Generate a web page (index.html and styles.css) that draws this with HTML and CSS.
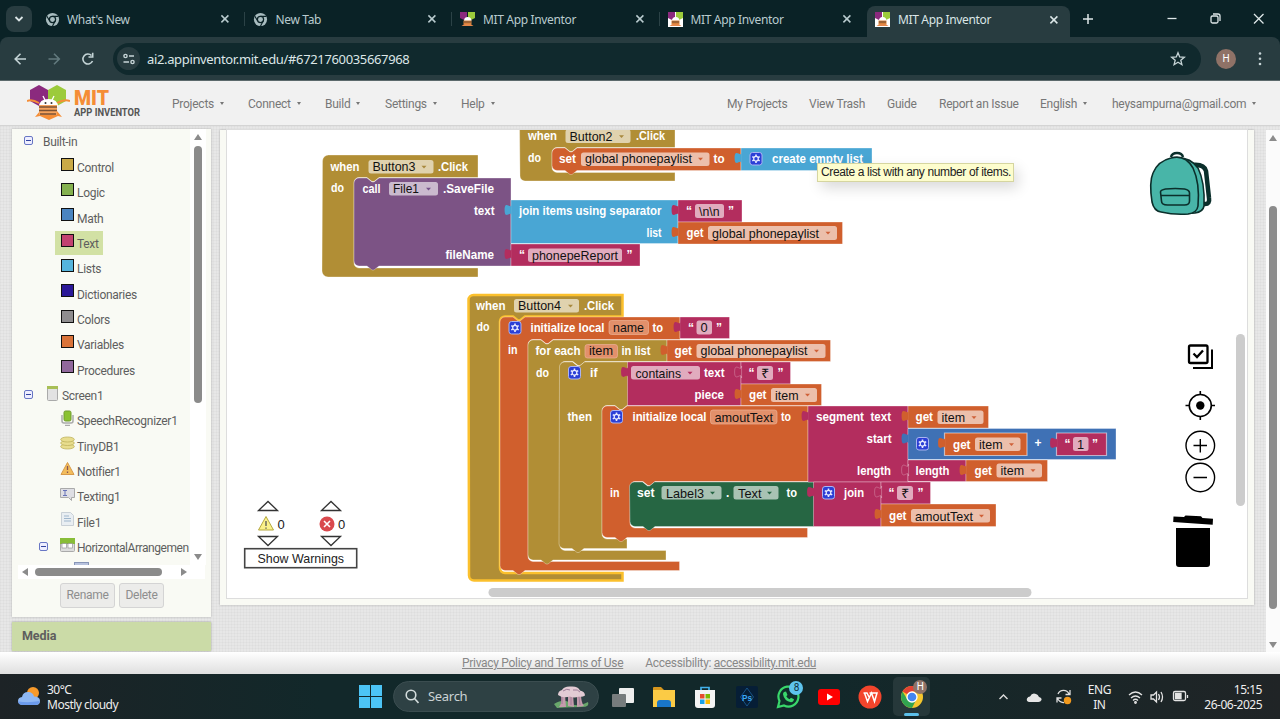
FILE: index.html
```html
<!DOCTYPE html>
<html lang="en">
<head>
<meta charset="utf-8">
<title>MIT App Inventor</title>
<link rel="stylesheet" href="styles.css">
</head>
<body>
<svg class="defs" width="0" height="0">
  <defs>
    <symbol id="chrome" viewBox="0 0 16 16"><circle cx="8" cy="8" r="7" fill="#a9bdc0"/><circle cx="8" cy="8" r="3.300" fill="#a9bdc0" stroke="#0a2226" stroke-width="1.300"/><path d="M8 4.600H14.200M5 9.700L2 4.500M10.900 9.700L8 15" stroke="#0a2226" stroke-width="1.200"/></symbol>
    <symbol id="bee" viewBox="0 0 43 35"><path fill="#8b2a7e" d="M12 0l9 5v11l-9 5-9-5V5z"/><path fill="#9ccb3b" d="M30 0l9 5v11l-9 5-9-5V5z"/><path fill="none" stroke="#f58d36" stroke-width="2" d="M0 16q5-2 12 2M43 16q-6-2-13 2"/><path fill="#f58d36" d="M8 32l5-6h17l5 6-4-1-9 4-9-4z"/><path fill="#fff" d="M12 22q0-8 9.500-8t9.500 8z"/><path stroke="#fff" stroke-width="1.300" fill="none" d="M18 15l-2-4M25 15l2-4"/><rect x="12" y="20" width="18" height="10" fill="#f6a35d"/><path d="M12 22h18M12 25.500h18M13 29h16" stroke="#7b5235" stroke-width="1.400"/><circle cx="18.500" cy="18" r="1" fill="#333"/><circle cx="24.500" cy="18" r="1" fill="#333"/></symbol>
    <symbol id="beetall" viewBox="0 0 15 15"><path fill="#8b2a7e" d="M0 0h7v5L4 8 0 6z"/><path fill="#9ccb3b" d="M8 0h7v6l-4 2-3-3z"/><path fill="#fff" d="M4 9q0-4 3.700-4T11.500 9z"/><path fill="#d8813a" d="M3.500 8.500h8v4h-8z"/><path d="M4 10h7" stroke="#7b5235" stroke-width="1.200"/><path fill="#e5884a" d="M1.500 14l3-2h6l3 2z"/></symbol>
    <symbol id="x" viewBox="0 0 10 10"><path d="M1.400 1.400l7 7M8.400 1.400l-7 7" stroke="currentColor" stroke-width="1.500"/></symbol>
  </defs>
</svg>

<header class="tabstrip">
  <div class="tab-menu"><svg width="10" height="8" viewBox="0 0 10 8"><path d="M1.500 2l3.500 3.500L8.500 2" fill="none" stroke="#dbe5e6" stroke-width="1.800"/></svg></div>
  <div class="tabs">
    <div class="tab"><svg class="fav"><use href="#chrome"/></svg><span>What's New</span><svg class="close"><use href="#x"/></svg></div>
    <div class="tab sep"><svg class="fav"><use href="#chrome"/></svg><span>New Tab</span><svg class="close"><use href="#x"/></svg></div>
    <div class="tab sep"><svg class="fav"><use href="#beetall"/></svg><span>MIT App Inventor</span><svg class="close"><use href="#x"/></svg></div>
    <div class="tab sep"><svg class="fav boxed"><use href="#beetall"/></svg><span>MIT App Inventor</span><svg class="close"><use href="#x"/></svg></div>
    <div class="tab active"><svg class="fav boxed"><use href="#beetall"/></svg><span>MIT App Inventor</span><svg class="close"><use href="#x"/></svg></div>
  </div>
  <svg class="win" width="207" height="37" viewBox="1073 0 207 37"><g fill="none" stroke="#dfe8e9" stroke-width="1.300"><path d="M1083 19h10M1088 14v10" stroke-width="1.500"/><path d="M1167.500 18.500h9"/><rect x="1211" y="16" width="7" height="7" rx="1.500"/><path d="M1213 14h5q2 0 2 2v5"/><path d="M1254 14l9.500 9.500M1263.500 14l-9.500 9.500"/></g></svg>
</header>

<div class="toolbar">
  <svg width="113" height="44" viewBox="0 37 113 44" fill="none" stroke-width="1.600"><path stroke="#c4d4d6" d="M26 59H15.500M20.500 53.700L15.200 59l5.300 5.300"/><path stroke="#637a7e" d="M48.500 59H59M54 53.700l5.300 5.300-5.300 5.300"/><path stroke="#c4d4d6" d="M92.500 61a5 5 0 1 1-1-5.500M92.700 52.800v4.200h-4.200"/></svg>
  <div class="omnibox">
    <span class="site-info"><svg width="14" height="12" viewBox="0 0 14 12" fill="none" stroke="#c7d5d7" stroke-width="1.400"><circle cx="3.500" cy="3" r="1.600"/><path d="M7 3h5M1.500 9H7"/><circle cx="10.500" cy="9" r="1.600"/></svg></span>
    <span class="url">ai2.appinventor.mit.edu/#6721760035667968</span>
    <svg width="16" height="16" viewBox="0 0 16 16"><path d="M8 1.800l1.700 4.200 4.600.3-3.500 2.900 1.100 4.500L8 11.200l-3.900 2.500 1.100-4.500L1.700 6.300l4.600-.3z" fill="none" stroke="#c7d5d7" stroke-width="1.300"/></svg>
  </div>
  <span class="avatar">H</span>
  <svg width="6" height="16" viewBox="0 0 6 16" fill="#c7d5d7"><circle cx="3" cy="2.500" r="1.300"/><circle cx="3" cy="7.800" r="1.300"/><circle cx="3" cy="13" r="1.300"/></svg>
</div>

<div class="appbar">
  <svg class="logo" width="43" height="35"><use href="#bee"/></svg>
  <svg class="brand" width="102" height="30" viewBox="0 0 102 30"><text class="mit" x="4" y="16.500" textLength="35">MIT</text><text class="sub" x="4" y="27.500" textLength="66">APP INVENTOR</text></svg>
  <nav class="menu-left"><span class="dd">Projects</span><span class="dd">Connect</span><span class="dd">Build</span><span class="dd">Settings</span><span class="dd">Help</span></nav>
  <nav class="menu-right"><span>My Projects</span><span>View Trash</span><span>Guide</span><span>Report an Issue</span><span class="dd">English</span><span class="dd">heysampurna@gmail.com</span></nav>
</div>

<main class="page">
  <aside class="side">
    <section class="blocks-panel">
      <div class="tree-wrap">
        <div class="tree">
          <div class="row root"><i class="toggle"></i><span>Built-in</span></div>
          <div class="row leaf"><i class="sw control"></i><span>Control</span></div>
          <div class="row leaf"><i class="sw logic"></i><span>Logic</span></div>
          <div class="row leaf"><i class="sw math"></i><span>Math</span></div>
          <div class="row leaf"><div class="selected"><i class="sw text"></i><span>Text</span></div></div>
          <div class="row leaf"><i class="sw lists"></i><span>Lists</span></div>
          <div class="row leaf"><i class="sw dict"></i><span>Dictionaries</span></div>
          <div class="row leaf"><i class="sw colors"></i><span>Colors</span></div>
          <div class="row leaf"><i class="sw vars"></i><span>Variables</span></div>
          <div class="row leaf"><i class="sw procs"></i><span>Procedures</span></div>
          <div class="row root screen"><i class="toggle"></i><svg class="ico" viewBox="0 0 15 16"><rect x="2.500" y="1.500" width="10" height="14" rx="1" fill="#e2e2e2" stroke="#aaa"/><path d="M2 1h11v3H2z" fill="#a8bf56"/></svg><span>Screen1</span></div>
          <div class="row leaf"><svg class="ico" viewBox="0 0 15 16"><path d="M2 5v6q0 2 2 2h7q2 0 2-2V5M5 15.500h5" fill="none" stroke="#aaa" stroke-width="1.500"/><rect x="4" y="1" width="7" height="10" rx="1.500" fill="#8bc232" stroke="#6f9b2f"/></svg><span>SpeechRecognizer1</span></div>
          <div class="row leaf"><svg class="ico" viewBox="0 0 15 16"><g fill="#e8dd8e" stroke="#bfb35c" stroke-width=".8"><ellipse cx="7.500" cy="11.500" rx="6.800" ry="2.500"/><ellipse cx="7.500" cy="8" rx="6.800" ry="2.500"/><ellipse cx="7.500" cy="4.500" rx="6.800" ry="2.500"/></g></svg><span>TinyDB1</span></div>
          <div class="row leaf"><svg class="ico" viewBox="0 0 15 16"><path d="M7.500 1.500L14 13.500H1z" fill="#f3bd5c" stroke="#d79a4a"/><path d="M7.500 5v4M7.500 10.500v1.500" stroke="#855" stroke-width="1.300"/></svg><span>Notifier1</span></div>
          <div class="row leaf"><svg class="ico" viewBox="0 0 15 16"><path d="M.5 2.500h14v9h-3v3l-3-3h-8z" fill="#dedee4" stroke="#aaa"/><path d="M3 4.500h4M5 4.500v5M3 9.500h4" stroke="#6672b8"/></svg><span>Texting1</span></div>
          <div class="row leaf"><svg class="ico" viewBox="0 0 15 16"><path d="M1.500 1.500h9l3 3v10h-12z" fill="#e9eef2" stroke="#c9d0d6"/><path d="M4 5h5M4 7.500h7M4 10h7" stroke="#9fb6cc"/></svg><span>File1</span></div>
          <div class="row nested"><i class="toggle"></i><svg class="ico" viewBox="0 0 15 16"><rect x=".5" y="1.500" width="14" height="13" rx="1" fill="#ddd" stroke="#aaa"/><path d="M0 1h15v6H0z" fill="#88bd38"/><rect x="2" y="6.500" width="4.500" height="4.500" fill="#fff" stroke="#888" stroke-width=".6"/><rect x="8" y="6.500" width="4.500" height="4.500" fill="#fff" stroke="#888" stroke-width=".6"/></svg><span>HorizontalArrangemen</span></div>
          <div class="row deep"><svg class="ico" viewBox="0 0 15 16"><rect x=".5" y=".5" width="14" height="10" fill="#b8c3de" stroke="#8896b8"/></svg></div>
        </div>
        <div class="vscroll"><i class="up"></i><b></b><i class="down"></i></div>
      </div>
      <div class="hscroll"><i class="left"></i><b></b><i class="right"></i></div>
      <div class="buttons"><span>Rename</span><span>Delete</span></div>
    </section>
    <section class="media">Media</section>
  </aside>

  <section class="workspace">
    <svg class="canvas" width="1020" height="468" viewBox="227 130 1020 468">
      <defs>
        <path id="tab" d="M.6 4c0 7-7-5-7 6s7-1 7 6z"/>
        <g id="gear"><rect x=".5" y=".5" width="12" height="12.500" rx="2.500" fill="#2b3fd6" stroke="#aab4f2"/><path d="M6.500 2.400v8.600M2.800 4.600l7.400 4.300M2.800 8.900l7.400-4.300" stroke="#e8eaff" stroke-width="1.600"/><circle cx="6.500" cy="6.700" r="2.300" fill="#2b3fd6" stroke="#e8eaff" stroke-width="1.200"/></g>
        <path id="dn" d="M-2.500-1.300h5L0 1.600z"/>
      </defs>

      <!-- Button2.Click -->
      <g class="blk">
        <path class="gold" d="M519.500 120H675v27.500H577l-5 4h-2l-5-4h-8a5 5 0 0 0-5 5v15a5 5 0 0 0 5 5H675v8.500H525a5 5 0 0 1-5-5z"/>
        <path class="orange" d="M552 153a5 5 0 0 1 5-5h8l5 4h2l5-4H741v22.500H577l-5 4h-2l-5-4h-8a5 5 0 0 1-5-5z"/>
        <path class="blue" d="M741 148h131v22.500H741z"/><use href="#tab" x="741" y="148" class="blue"/>
      </g>
      <!-- Button3.Click -->
      <g class="blk">
        <path class="gold" d="M322.500 161a6 6 0 0 1 6-6H478v22.500H379l-5 4h-2l-5-4h-8a5 5 0 0 0-5 5v80.500a5 5 0 0 0 5 5H478v9H328a6 6 0 0 1-6-6z"/>
        <path class="purple" d="M354 183a5 5 0 0 1 5-5h8l5 4h2l5-4H511v88H379l-5 4h-2l-5-4h-8a5 5 0 0 1-5-5z"/>
        <path class="blue" d="M511 200h167v43.500H511z"/><use href="#tab" x="511" y="200" class="blue"/>
        <path class="pink" d="M678 200h64v22h-64z"/><use href="#tab" x="678" y="200" class="pink"/>
        <path class="orange" d="M678 222h164.500v22H678z"/><use href="#tab" x="678" y="222" class="orange"/>
        <path class="pink" d="M511 244h129v22H511z"/><use href="#tab" x="511" y="244" class="pink"/>
      </g>
      <!-- Button4.Click, currently selected -->
      <g class="blk">
        <path class="gold picked" d="M468.500 300a5 5 0 0 1 5-5H622.500v21.500H525l-5 4h-2l-5-4h-8a5 5 0 0 0-5 5v46V568a5 5 0 0 0 5 5H622.500v7.500H474a5 5 0 0 1-5-5z"/>
        <path class="orange" d="M500 322a5 5 0 0 1 5-5h8l5 4h2l5-4H680v22.500H553l-5 4h-2l-5-4h-8a5 5 0 0 0-5 5v212a5 5 0 0 0 5 5H679.500v9H525l-5 4h-2l-5-4h-8a5 5 0 0 1-5-5z"/>
        <path class="gold" d="M528 345a5 5 0 0 1 5-5h8l5 4h2l5-4H667v21.500H585l-5 4h-2l-5-4h-8a5 5 0 0 0-5 5v179a5 5 0 0 0 5 5H666v9.500H553l-5 4h-2l-5-4h-8a5 5 0 0 1-5-5z"/>
        <path class="gold" d="M559.500 367a5 5 0 0 1 5-5h8l5 4h2l5-4H628v43.500H627l-5 4h-2l-5-4h-8a5 5 0 0 0-5 5v123.500a5 5 0 0 0 5 5H627v9.500H584l-5 4h-2l-5-4h-8a5 5 0 0 1-5-5z"/>
        <path class="orange" d="M602 411a5 5 0 0 1 5-5h8l5 4h2l5-4H808v75.500H655l-5 4h-2l-5-4h-8a5 5 0 0 0-5 5v36.500a5 5 0 0 0 5 5H807.500v9.500H627l-5 4h-2l-5-4h-8a5 5 0 0 1-5-5z"/>
        <path class="green" d="M629.500 487a5 5 0 0 1 5-5h8l5 4h2l5-4H814v44.500H655l-5 4h-2l-5-4h-8a5 5 0 0 1-5-5z"/>
        <path class="pink" d="M680 317h49.500v21.500H680z"/><use href="#tab" x="680" y="317" class="pink"/>
        <path class="orange" d="M667 340h163.500v21.500H667z"/><use href="#tab" x="667" y="340" class="orange"/>
        <path class="pink" d="M627.500 362H741v43.500H627.500z"/><use href="#tab" x="627.500" y="362" class="pink"/>
        <path class="pink" d="M741 362h49.500v22H741z"/><use href="#tab" x="741" y="362" class="pink seam"/>
        <path class="orange" d="M741 384h80.500v21.500H741z"/><use href="#tab" x="741" y="384" class="orange"/>
        <path class="pink" d="M808 406h100v76H808z"/><use href="#tab" x="808" y="406" class="pink"/>
        <path class="orange" d="M908 406h80.500v22H908z"/><use href="#tab" x="908" y="406" class="orange"/>
        <path class="navy" d="M908 428.500h208v31H908z"/><use href="#tab" x="908" y="428.500" class="navy"/>
        <path class="orange inset" d="M944.500 433H1027v22.500H944.500z"/><use href="#tab" x="944.500" y="433" class="orange"/>
        <path class="pink inset" d="M1056.500 433h50v22.500h-50z"/><use href="#tab" x="1056.500" y="433" class="pink"/>
        <path class="pink" d="M908 460h58v21.500h-58z"/><use href="#tab" x="908" y="460" class="pink seam"/>
        <path class="orange" d="M966 460h81.500v21.500H966z"/><use href="#tab" x="966" y="460" class="orange"/>
        <path class="pink" d="M813.500 482H881v44.500H813.500z"/><use href="#tab" x="813.500" y="482" class="pink"/>
        <path class="pink" d="M881 482h49.500v22H881z"/><use href="#tab" x="881" y="482" class="pink seam"/>
        <path class="orange" d="M881 504h115v22.500H881z"/><use href="#tab" x="881" y="504" class="orange"/>
      </g>

      <!-- editable fields -->
      <g class="chips">
        <rect x="565.500" y="129.500" width="65" height="13.500" rx="2.500"/><rect x="581" y="152.500" width="128.500" height="13.500" rx="2.500"/>
        <rect x="368.500" y="160" width="65" height="13.500" rx="2.500"/><rect x="389" y="182" width="49" height="13.500" rx="2.500"/>
        <rect x="695" y="204" width="29" height="14" rx="2.500"/><rect x="708" y="226" width="129" height="14" rx="2.500"/><rect x="528" y="248.500" width="94" height="13.500" rx="2.500"/>
        <rect x="514" y="299" width="65" height="13.500" rx="2.500"/><rect x="696.500" y="320.500" width="15.500" height="14" rx="2.500"/><rect x="696.500" y="344" width="129" height="14" rx="2.500"/>
        <rect x="631" y="366" width="69" height="13.500" rx="2.500"/><rect x="757" y="366" width="16" height="14" rx="2.500"/><rect x="771" y="388" width="46" height="14" rx="2.500"/>
        <rect x="937.500" y="410.500" width="46" height="13.500" rx="2.500"/><rect x="975" y="437.500" width="45.500" height="13.500" rx="2.500"/><rect x="1073" y="437" width="15.500" height="14" rx="2.500"/><rect x="996.500" y="463.500" width="45.500" height="14" rx="2.500"/>
        <rect x="661.500" y="486" width="60" height="13.500" rx="2.500"/><rect x="733.500" y="486" width="45" height="13.500" rx="2.500"/><rect x="897" y="486" width="16" height="14" rx="2.500"/><rect x="911" y="509" width="79" height="13.500" rx="2.500"/>
      </g>
      <g class="local"><rect x="609" y="320.500" width="39.500" height="14" rx="2.500"/><rect x="585" y="344.500" width="32.500" height="13.500" rx="2.500"/><rect x="710.500" y="410" width="66.500" height="14" rx="2.500"/></g>
      <g fill="#a8893d"><use href="#dn" x="621.500" y="136.500"/><use href="#dn" x="424" y="167"/><use href="#dn" x="570.500" y="306"/></g>
      <g fill="#cf6038"><use href="#dn" x="700.500" y="159"/><use href="#dn" x="828" y="233"/><use href="#dn" x="816.500" y="351"/><use href="#dn" x="807.500" y="395"/><use href="#dn" x="974" y="417.500"/><use href="#dn" x="1011.500" y="444.500"/><use href="#dn" x="1033" y="470.500"/><use href="#dn" x="981.500" y="516"/></g>
      <use href="#dn" x="428.500" y="189" fill="#74508a"/><use href="#dn" x="690" y="373" fill="#b32d5e"/><g fill="#266643"><use href="#dn" x="712.500" y="493"/><use href="#dn" x="769.500" y="493"/></g>
      <use href="#gear" x="749.500" y="152"/><use href="#gear" x="508.500" y="321"/><use href="#gear" x="568" y="366"/><use href="#gear" x="610" y="410"/><use href="#gear" x="916" y="437"/><use href="#gear" x="822" y="486"/>

      <g class="lbl">
        <text x="528" y="140" textLength="29">when</text><text x="636" y="140" textLength="29">.Click</text><text x="528" y="162" textLength="13">do</text><text x="559" y="163" textLength="17">set</text><text x="713.500" y="163" textLength="11">to</text><text x="772" y="163" textLength="91">create empty list</text>
        <text x="330.500" y="170.500" textLength="29">when</text><text x="438" y="170.500" textLength="30">.Click</text><text x="331" y="192" textLength="13">do</text><text x="362.500" y="192.500" textLength="18">call</text><text x="443" y="192.500" textLength="51">.SaveFile</text>
        <text x="474" y="215" textLength="20.500">text</text><text x="519" y="215" textLength="142.500">join items using separator</text><text x="646.500" y="237" textLength="15">list</text><text x="686.500" y="237" textLength="17">get</text><text x="445.500" y="259" textLength="48.500">fileName</text>
        <text x="686" y="215">“</text><text x="728" y="215">”</text><text x="519" y="259">“</text><text x="626.500" y="259">”</text>
        <text x="476" y="309.500" textLength="29.500">when</text><text x="584" y="309.500" textLength="30">.Click</text><text x="476.500" y="331" textLength="13">do</text><text x="530.500" y="331.500" textLength="74">initialize local</text><text x="652.500" y="331.500" textLength="10.500">to</text><text x="688" y="331.500">“</text><text x="716" y="331.500">”</text>
        <text x="508" y="354" textLength="9.500">in</text><text x="535.500" y="354.500" textLength="45">for each</text><text x="621.500" y="354.500" textLength="29">in list</text><text x="674.500" y="354.500" textLength="17.500">get</text>
        <text x="536" y="376.500" textLength="13">do</text><text x="590" y="377" textLength="7.500">if</text><text x="704" y="377" textLength="20.500">text</text><text x="748.500" y="377">“</text><text x="777.500" y="377">”</text><text x="694.500" y="399" textLength="29.500">piece</text><text x="749" y="399" textLength="17.500">get</text>
        <text x="567.500" y="420.500" textLength="24.500">then</text><text x="632.500" y="421" textLength="74">initialize local</text><text x="781" y="421" textLength="10">to</text><text x="816" y="421" textLength="48">segment</text><text x="870.500" y="421" textLength="20.500">text</text><text x="915.500" y="421" textLength="17.500">get</text>
        <text x="866.500" y="443" textLength="25">start</text><text x="953" y="448.500" textLength="17.500">get</text><text x="1034.500" y="447">+</text><text x="1064.500" y="448">“</text><text x="1092" y="448">”</text><text x="857" y="474.500" textLength="34">length</text><text x="915.500" y="474.500" textLength="34">length</text><text x="974.500" y="474.500" textLength="17.500">get</text>
        <text x="610" y="496.500" textLength="9.500">in</text><text x="637" y="497" textLength="17.500">set</text><text x="726" y="497">.</text><text x="786.500" y="497" textLength="10.500">to</text><text x="844" y="497" textLength="20">join</text><text x="888.500" y="497">“</text><text x="917.500" y="497">”</text><text x="889" y="520" textLength="17.500">get</text>
      </g>
      <g class="val">
        <text x="569.500" y="140.500" textLength="43">Button2</text><text x="585" y="163" textLength="107">global phonepaylist</text><text x="372.500" y="171" textLength="43">Button3</text><text x="393" y="193" textLength="26">File1</text><text x="699" y="215.500" textLength="20.500">\n\n</text><text x="712" y="237.500" textLength="107">global phonepaylist</text><text x="532" y="259.500" textLength="86">phonepeReport</text>
        <text x="518" y="310" textLength="43">Button4</text><text x="613" y="332" textLength="31">name</text><text x="700.500" y="332">0</text><text x="589" y="355" textLength="24">item</text><text x="700.500" y="355" textLength="107">global phonepaylist</text><text x="635.500" y="377.500" textLength="45.500">contains</text><text x="761" y="377.500" textLength="8">₹</text><text x="775" y="399.500" textLength="23.500">item</text><text x="714.500" y="421.500" textLength="58.500">amoutText</text><text x="941.500" y="421.500" textLength="23.500">item</text><text x="979" y="448.500" textLength="23.500">item</text><text x="1077" y="448.500">1</text><text x="1000.500" y="475" textLength="23.500">item</text>
        <text x="666" y="497.500" textLength="38">Label3</text><text x="738" y="497.500" textLength="23.500">Text</text><text x="901" y="497.500" textLength="8">₹</text><text x="915" y="520.500" textLength="58">amoutText</text>
      </g>

      <!-- warning counters -->
      <g fill="none" stroke="#333" stroke-width="1.300"><path d="M258.500 510.500h19l-9.500-9zM321.500 510.500h19l-9.500-9zM258.500 536.500h19l-9.500 9zM321.500 536.500h19l-9.500 9z"/></g>
      <path d="M266 516.500l7.500 13.500h-15z" fill="#fbf18a" stroke="#b5a83f"/><path d="M266 521v5M266 527.500v1.300" stroke="#555" stroke-width="1.300"/>
      <circle cx="327" cy="524" r="7.500" fill="#d9494d"/><path d="M324 521l6 6M330 521l-6 6" stroke="#fff" stroke-width="1.600"/>
      <text class="plain" x="277.500" y="529">0</text><text class="plain" x="338" y="529">0</text>
      <rect x="244.700" y="548.700" width="112" height="19" fill="#fff" stroke="#444" stroke-width="1.600"/><text class="plain" x="257.500" y="563" textLength="86.500">Show Warnings</text>

      <!-- backpack -->
      <g stroke="#0b2f2b" stroke-width="1.600" fill="#48b5a8"><path d="M1193 165q11-1 13 6l3 27q1 6-4 6h-5" fill="none" stroke-width="4.500"/><path d="M1171 157q1-4 6-4t6 4" fill="none" stroke-width="2.500"/><path d="M1176 158q14-1 22 10 7 14 6 38-1 6-9 7l-14 1z"/><path d="M1171 158q14-4 22 10 7 15 5 38-1 7-10 8-14 1-27-2-7-1-9-10-3-20 1-29 5-12 18-15z"/><path d="M1160.500 192q0-2 5-3 10-1 19 0 5 1 5 4v8q0 4-5 4h-17q-6 0-6-4zM1161 195.500h29"/></g>
      <!-- workspace controls -->
      <g fill="none" stroke="#000" stroke-width="2"><rect x="1189" y="345.500" width="18.500" height="17.500" rx="1.500" stroke-width="2.300"/><path d="M1193.500 353.500l3.500 3.500 6-6.500" stroke-width="2.300"/><path d="M1212 349.500v18.500h-19"/><circle cx="1200.300" cy="405.500" r="11" stroke-width="1.600"/><path d="M1200.300 391v4M1200.300 416v4M1185.500 405.500h4M1211 405.500h4" stroke-width="1.600"/><g stroke-width="1.400"><circle cx="1200.300" cy="445.500" r="14.300"/><circle cx="1200.300" cy="477.500" r="14.300"/><path d="M1193.500 445.500h13.500M1200.300 439v13.500M1193.500 477.500h13.500"/></g></g>
      <circle cx="1200.300" cy="405.500" r="4.200"/>
      <path d="M1173.500 516.500l10.500.5 1.500-1.500 15.500.8 1.500 1.800 10.500.6-.3 6-39.500-2.600zM1176 528h34V564q0 3-3 3h-28q-3 0-3-3z"/>
      <rect x="488.500" y="588" width="543" height="9" rx="4.500" fill="#ccc"/><rect x="1236" y="334" width="9" height="172" rx="4.500" fill="#ccc"/>
    </svg>
    <div class="tooltip">Create a list with any number of items.</div>
  </section>
  <div class="vscroll outer"><i class="up"></i><b></b><i class="down"></i></div>
</main>

<footer class="legal"><u>Privacy Policy and Terms of Use</u><span>Accessibility: <u>accessibility.mit.edu</u></span></footer>

<div class="taskbar">
  <div class="weather"><svg width="26" height="24" viewBox="0 0 26 24"><circle cx="16" cy="8" r="6" fill="#f79a2b"/><path d="M5 20q-4-.5-4-4t4-4q1-5 6-5 5 0 6 4.500 6 0 6 4.500t-5 4z" fill="#8fb8f3"/><path d="M5 20q-4-.5-3.500-3.500Q12 18 22.500 16q0 4-4.500 4z" fill="#6b9bec"/></svg><div><p>30°C</p><p>Mostly cloudy</p></div></div>
  <svg class="start" width="23" height="23" viewBox="0 0 23 23"><path fill="#4cc4f5" d="M0 0h11v11H0zM12 0h11v11H12zM0 12h11v11H0zM12 12h11v11H12z"/></svg>
  <div class="search"><svg width="14" height="15" viewBox="0 0 14 15" fill="none" stroke="#d3dcdc" stroke-width="1.600"><circle cx="6" cy="6" r="4.800"/><path d="M9.500 9.500l4 4.500"/></svg><span>Search</span><svg width="40" height="24" viewBox="0 0 40 24"><path d="M3 19q10-6 16-1t18-1q2 5-6 5T6 23z" fill="#69a76b"/><path d="M8 22q3-3 2-12h4l1 12zM17 21V9h5l1 13zM26 22V8h4q0 10 3 13z" fill="#c59bac"/><path d="M7 10q0-4 4-5 2-4 9-3.500 7-.5 9 4 5 1 5 5-3 2-6 1-5 2-9 0-7 2-12-1.500z" fill="#e3cbd4"/><path d="M12 6q4-3 7-1M22 5q5-1 7 2M11 12v7M20 12v8M28 12l1 8" stroke="#9f7d98" fill="none"/></svg></div>
  <div class="apps">
    <div><svg viewBox="0 0 24 24"><rect x="8" y="3" width="15" height="15" rx="1" fill="#eee"/><rect x="1" y="9" width="14" height="13" rx="1" fill="#777c7d"/></svg></div>
    <div><svg viewBox="0 0 24 24"><path d="M1 3q0-1 1-1h7l3 3H1z" fill="#d6961d"/><path d="M1 5h22v17H1z" fill="#fbcb45"/><path d="M5 22v-4q0-3 3-3h8q3 0 3 3v4z" fill="#1976c8"/></svg></div>
    <div><svg viewBox="0 0 24 24"><path d="M8 6V2.500h8V6" fill="none" stroke="#42b1eb" stroke-width="1.700"/><path d="M2 5h20v15q0 3-3 3H5q-3 0-3-3z" fill="#f4f4f4"/><path d="M7 9h4.500v4.500H7z" fill="#e74c2c"/><path d="M12.500 9H17v4.500h-4.500z" fill="#7eb900"/><path d="M7 14.500h4.500V19H7z" fill="#18a0e8"/><path d="M12.500 14.500H17V19h-4.500z" fill="#fcb900"/></svg></div>
    <div class="ps"><svg viewBox="0 0 24 24"><rect x="1" y="1" width="22" height="22" rx="2" fill="#061e36"/><path d="M12 3l6.500 9-6.500 9-6.500-9z" fill="none" stroke="#1a5f99" stroke-width=".8"/><text x="7" y="15.500" textLength="10">Ps</text></svg></div>
    <div class="wa"><svg viewBox="0 0 24 24"><path d="M2 22l1.500-6A10 10 0 1 1 8 20.500z" fill="#0f2f2a" stroke="#39d76b" stroke-width="2.200"/><path d="M8 7l2-.5 1.500 3.500-1.200 1.300q1 2.200 3.200 3l1.500-1.500 3 1.500q-.5 3-3 3-7-1.500-8-8 0-1.500 1-2.300z" fill="#39d76b"/></svg><b>8</b></div>
    <div><svg viewBox="0 0 24 24"><rect x="1" y="4" width="22" height="16" rx="3" fill="#f00"/><path d="M10 8.500l6 3.500-6 3.500z" fill="#fff"/></svg></div>
    <div><svg viewBox="0 0 24 24"><circle cx="12" cy="12" r="11.500" fill="#f3452c"/><path d="M5.500 8H9l2 4M6.500 8l3 8.500L13.500 8l3 8.500L19 8h-7.500" fill="none" stroke="#fff" stroke-width="1.500"/></svg></div>
    <div class="current"><svg viewBox="0 0 24 24"><circle cx="12" cy="12" r="11" fill="#f6c62d"/><path d="M12 12L2.500 6.500A11 11 0 0 1 21.500 6.500H12z" fill="#e34133"/><path d="M2.500 6.500A11 11 0 0 0 12 23l4.500-9L12 12 7 14z" fill="#31a450"/><circle cx="12" cy="12" r="5" fill="#4385f0" stroke="#fff" stroke-width="1.300"/></svg><b>H</b></div>
  </div>
  <svg class="tray" width="90" height="44" viewBox="995 675 90 44"><path d="M1000.500 699l4-4 4 4" fill="none" stroke="#ddd" stroke-width="1.400"/><path d="M1030 702q-3-1-2-3.500 1-2 3-2 2-4 6-2.500 2 .5 3 3 3 1 2.500 3-1 2-3 2z" fill="#e5e5e5"/><path d="M1059 694a6 6 0 0 1 11 0M1071 690v4.500h-4.500M1065 702.500a6 6 0 0 1-6.500-5M1058 702.500V698h4.500" fill="none" stroke="#e0e0e0" stroke-width="1.300"/><circle cx="1068.500" cy="700.500" r="3.700" fill="#f39a1d"/></svg>
  <div class="lang"><p>ENG</p><p>IN</p></div>
  <svg class="net" width="64" height="44" viewBox="1126 675 64 44" fill="none" stroke="#e4e4e4" stroke-width="1.300"><path d="M1129 695q6.500-6 13 0M1131 698q4.500-4 9 0M1133 700.500q2.500-2.500 5 0"/><circle cx="1135.500" cy="702.500" r=".8"/><path d="M1151 695h2.500l3-3v10l-3-3H1151zM1158.500 694q2 3 0 6M1161 692q3 5 0 10"/><rect x="1173.500" y="691.500" width="12" height="9" rx="1.500"/><path d="M1175.500 693.500h5.500v5h-5.500z" fill="#e4e4e4"/><path d="M1187.500 695v3"/></svg>
  <div class="clock"><p>15:15</p><p>26-06-2025</p></div>
</div>
<script src="main.js"></script>
</body>
</html>
```
FILE: main.js
```js
// Labels with a measured width scale their glyphs to it instead of only their spacing.
document.querySelectorAll('text[textLength]').forEach(function (label) {
  label.setAttribute('lengthAdjust', 'spacingAndGlyphs');
});
```
FILE: styles.css
```css
* { box-sizing: border-box; }
body { margin: 0; width: 1280px; height: 719px; overflow: hidden; background: #0a2226; font-family: Roboto, sans-serif; display: flex; flex-direction: column; }
p { margin: 0; }
.defs { position: absolute; }

/* browser window */
.tabstrip { height: 37px; flex: none; background: #0a2226; display: flex; font: 12px "Noto Sans", "Open Sans", sans-serif; color: #b9cbce; }
.tab-menu { width: 26px; height: 26px; margin: 6px 4px 0 6px; border-radius: 8px; background: #283c40; display: grid; place-items: center; }
.tabs { display: grid; grid-template-columns: repeat(5, 207.5px); width: 1037px; }
.tab { display: flex; align-items: center; padding: 0 14px 0 9px; height: 38px; letter-spacing: -.35px; white-space: nowrap; }
.tab span { margin-left: 7px; flex: 1; }
.sep span { margin-left: 8px; }
.fav { width: 15px; height: 15px; }
.boxed { background: #fff; }
.close { width: 10px; height: 10px; }
.sep { background: linear-gradient(#2b4246, #2b4246) 0 12px / 1px 14px no-repeat; }
.active { background: #283c40; border-radius: 8px 8px 0 0; margin: 6px 4px 0 1px; height: 32px; padding: 0 11px 5px 8px; color: #dbe6e7; }
.active span { margin-left: 8px; }
.toolbar { height: 44px; flex: none; background: #283c40; display: flex; align-items: center; border-radius: 8px 8px 0 0; border-bottom: 1px solid #5c6a6c; }
.omnibox { width: 1088px; height: 32px; border-radius: 16px; background: #10292d; display: flex; align-items: center; padding: 0 15px 0 4px; }
.site-info { width: 23px; height: 23px; border-radius: 50%; background: #283c40; display: grid; place-items: center; }
.url { flex: 1; margin-left: 7px; font: 13px "Noto Sans", sans-serif; color: #dce6e7; letter-spacing: -.35px; }
.avatar { width: 20px; height: 20px; border-radius: 50%; background: #8f7267; color: #fff; font: 10px/20px Roboto, sans-serif; text-align: center; margin: 0 21px 0 15px; }

/* app header */
.appbar { height: 45px; flex: none; background: #f1f1f1; border-bottom: 1px solid #d4d4d4; display: flex; align-items: center; padding-left: 27px; color: #777; font-size: 12px; letter-spacing: -.25px; }
.logo { margin-top: -1px; }
.brand { font-family: Roboto, sans-serif; letter-spacing: 0; }
.mit { font-size: 20px; font-weight: 900; fill: #f58d36; }
.sub { font-size: 10px; font-weight: bold; fill: #555; }
.menu-left, .menu-right { display: grid; white-space: nowrap; padding-top: 2px; }
.menu-left { grid-template-columns: 76px 77px 60px 76px 266px; }
.menu-right { grid-template-columns: 82px 78px 52px 101px 72px 150px; }
.dd::after { content: ""; display: inline-block; border: 2.5px solid transparent; border-top: 3px solid #777; border-bottom: 0; margin: 0 0 3px 6px; }

/* page body */
.page { height: 526px; flex: none; display: flex; background-color: #e7e7e7; background-image: repeating-linear-gradient(90deg, rgba(0,0,0,.025) 0 1px, transparent 1px 3px), repeating-linear-gradient(rgba(0,0,0,.025) 0 1px, transparent 1px 3px); padding-left: 12px; }
.side { width: 199px; margin-right: 9px; padding-top: 3px; color: #5e5e5e; font-size: 12px; letter-spacing: -.3px; }
.blocks-panel { height: 488px; background: #f9faf4; box-shadow: 0 0 2px #aaa; display: flex; flex-direction: column; margin-bottom: 5px; }
.tree-wrap { height: 436px; display: flex; }
.tree { width: 179px; overflow: hidden; }
.row { height: 25.35px; display: flex; align-items: center; white-space: nowrap; }
.row span { line-height: 16px; }
.leaf { padding-left: 49px; }
.leaf span, .nested span { margin-left: 3px; padding-top: 2px; }
.nested span { letter-spacing: -.45px; }
.root { padding-left: 12px; }
.root span { margin-left: 10px; }
.screen .ico { margin-left: 12px; }
.screen span { margin-left: 3px; padding-top: 2px; }
.nested { padding-left: 27px; }
.nested .ico { margin-left: 12px; }
.deep { padding-left: 63px; }
.toggle { width: 9px; height: 9px; border: 1px solid #6876c4; border-radius: 2px; background: linear-gradient(#33449f, #33449f) 1px 3px / 5px 1px no-repeat #eef; flex: none; margin-bottom: 2px; }
.sw { width: 13px; height: 13px; border: 1px solid #111; margin-bottom: 6px; flex: none; }
.ico { width: 15px; height: 16px; margin: 0 -1px 5px -1px; flex: none; }
.selected { display: flex; align-items: center; background: #d2e1a4; height: 24px; margin-left: -6px; padding: 0 4px 0 6px; }
.control { background: #c9a947; } .logic { background: #85b14f; } .math { background: #4a84c0; } .text { background: #c24270; } .lists { background: #55b4dc; }
.dict { background: #2b1898; } .colors { background: #8f8d8f; } .vars { background: #da7339; } .procs { background: #91689c; }
.vscroll { width: 16px; background: #fff; margin-left: -1px; display: flex; flex-direction: column; align-items: center; padding: 5px 0; z-index: 1; }
.vscroll b { width: 8px; height: 257px; border-radius: 4px; background: #8b8b8b; margin-top: 6px; }
.up, .down { border: 4.5px solid transparent; }
.up { border-top: 0; border-bottom: 6.5px solid #8b8b8b; }
.down { border-bottom: 0; border-top: 6.5px solid #8b8b8b; margin-top: auto; }
.hscroll { height: 14px; margin: 0 6px; background: #fff; display: flex; align-items: center; padding: 0 18px 0 4px; }
.hscroll b { width: 127px; height: 8px; border-radius: 4px; background: #8b8b8b; margin: 0 auto 0 7px; }
.left, .right { border: 4.5px solid transparent; }
.left { border-left: 0; border-right: 6.5px solid #8b8b8b; }
.right { border-right: 0; border-left: 6.5px solid #8b8b8b; }
.buttons { display: flex; gap: 4px; padding: 4px 0 0 48px; }
.buttons span { height: 25px; line-height: 23px; padding: 0 5.5px; border: 1px solid #d4d4d4; border-radius: 3px; background: #ececea; color: #8e8e8e; }
.media { height: 29px; line-height: 28px; padding-left: 10px; background: #cbdba7; box-shadow: 0 0 2px #999; font-weight: bold; font-size: 12.5px; letter-spacing: -.1px; }

.workspace { position: relative; width: 1034px; height: 475px; margin-top: 4px; padding: 0 6px 6px 7px; background: #f9faf4; box-shadow: 0 0 2px #aaa; }
.canvas { display: block; background: #fff; outline: 1px solid #ddd; font-family: "Liberation Sans", Arial, sans-serif; font-size: 12px; }
.tooltip { position: absolute; left: 597px; top: 33px; height: 19px; width: 197px; padding-left: 3px; background: #fdfdcd; border: 1px solid #d5d5a0; box-shadow: 4px 6px 14px rgba(0,0,0,.15); font: 12px/17px "Liberation Sans", Arial, sans-serif; letter-spacing: -.36px; color: #222; white-space: nowrap; }
.outer { margin: 4px 0 0 auto; width: 14px; background: #fbfbfb; padding: 5px 0 4px; }
.outer b { height: 403px; margin-top: 65px; }

/* blocks */
.blk path, .blk use { stroke: rgba(255,255,255,.4); stroke-width: .8; }
.blk use { stroke: none; }
#tab { stroke: inherit; }
.blk .seam { stroke: rgba(255,255,255,.3); stroke-width: .8; }
.gold { fill: #b18e35; } .orange { fill: #d05f2d; } .pink { fill: #b32d5e; } .blue { fill: #49a6d4; } .purple { fill: #7c5385; } .navy { fill: #3f71b5; } .green { fill: #266643; }
.blk .picked { stroke: #fbc02d; stroke-width: 2.5; }
.blk .inset { stroke: rgba(255,255,255,.55); stroke-width: 1.2; }
.chips { fill: rgba(255,255,255,.6); }
.local rect { fill: #e2906b; stroke: #ecb296; stroke-width: .7; }
.lbl { fill: #fff; font-weight: bold; }
.val { fill: #111; font-size: 12.8px; }
.plain { font-size: 13px; fill: #222; }

.legal { height: 22px; flex: none; background: linear-gradient(#fff, #dfdfdf); color: #888; font-size: 12px; line-height: 22px; letter-spacing: -.3px; padding-left: 462px; display: flex; gap: 22px; white-space: nowrap; }

/* desktop taskbar */
.taskbar { height: 45px; flex: none; background: linear-gradient(90deg, #1d2326, #12282a 25%, #12282a 65%, #202426); display: flex; align-items: center; color: #eee; font: 12px/15px "Noto Sans", sans-serif; letter-spacing: -.5px; white-space: nowrap; }
.weather { width: 359px; padding-left: 17px; display: flex; align-items: center; gap: 4px; }
.start { flex: none; }
.search { width: 206px; height: 31px; margin: 0 3px 0 11px; border-radius: 16px; background: #2e4144; border: 1px solid #3b4d50; display: flex; align-items: center; padding: 0 7px 0 11px; font-size: 13px; color: #cbd3d4; letter-spacing: -.3px; }
.search span { flex: 1; margin-left: 9px; }
.apps { display: grid; grid-template-columns: repeat(8, 41.3px); height: 45px; }
.apps div { display: grid; place-items: center; position: relative; }
.apps svg { width: 24px; height: 24px; }
.apps b { position: absolute; right: 5px; top: 7px; width: 14px; height: 14px; border-radius: 50%; background: #5ec4ee; color: #103040; font: 10px/14px Roboto, sans-serif; text-align: center; letter-spacing: 0; }
.apps .current { background: #26383a; border-radius: 5px; margin: 3px 2px; }
.apps .current::after { content: ""; position: absolute; bottom: 0; width: 15px; height: 3px; border-radius: 2px; background: #5cc0ea; }
.apps .current b { top: 3px; right: 3px; background: #8f7267; color: #fff; }
.ps text { font: bold 9px "Liberation Sans", sans-serif; fill: #3aa9f5; letter-spacing: 0; }
.tray { margin-left: 62px; }
.lang { width: 34px; text-align: center; margin: 0 3px 0 -2px; }
.net { margin-left: 7px; }
.clock { margin-left: auto; padding-right: 18px; text-align: right; letter-spacing: -.5px; }
```
